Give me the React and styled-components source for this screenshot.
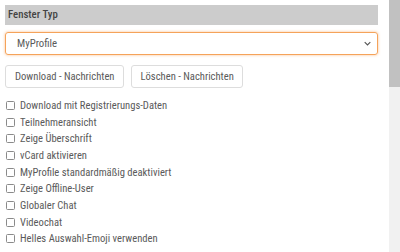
import React from 'react';
import styled, { createGlobalStyle } from 'styled-components';

const GlobalStyle = createGlobalStyle`
  html, body {
    margin: 0;
    padding: 0;
    background: #ffffff;
    font-family: Roboto, "Liberation Sans", sans-serif;
    overflow: hidden;
  }
`;

const options = [
  'Download mit Registrierungs-Daten',
  'Teilnehmeransicht',
  'Zeige Überschrift',
  'vCard aktivieren',
  'MyProfile standardmäßig deaktiviert',
  'Zeige Offline-User',
  'Globaler Chat',
  'Videochat',
  'Helles Auswahl-Emoji verwenden',
];

const App = () => {
  return (
    <>
      <GlobalStyle />
      <Frame>
        <Panel>
          <SectionTitle>Fenster Typ</SectionTitle>
          <Select>
            <span>MyProfile</span>
            <Chevron viewBox="0 0 10 6">
              <path d="M1 1l4 4 4-4" />
            </Chevron>
          </Select>
          <ButtonRow>
            <Button>Download - Nachrichten</Button>
            <Button>Löschen - Nachrichten</Button>
          </ButtonRow>
          <OptionList>
            {options.map((label) => (
              <Option key={label}>
                <Box />
                {label}
              </Option>
            ))}
          </OptionList>
        </Panel>
        <Scrollbar>
          <Thumb />
        </Scrollbar>
      </Frame>
    </>
  );
};

const Frame = styled.div`
  display: flex;
  width: 400px;
  height: 252px;
  overflow: hidden;
`;

const Panel = styled.div`
  flex: 0 0 auto;
  width: 373px;
  padding: 5px 0 0 5px;
  display: flex;
  flex-direction: column;
  font-stretch: 85%;
`;

const SectionTitle = styled.div`
  height: 20px;
  line-height: 20px;
  background: #cccccc;
  padding-left: 3px;
  font-size: 10.8px;
  font-weight: 500;
  color: #444444;
`;

const Select = styled.div`
  margin-top: 7px;
  height: 21px;
  border: 1px solid #f5a35a;
  border-radius: 3px;
  box-shadow: 0 0 3px rgba(245, 150, 70, 0.6);
  display: flex;
  align-items: center;
  justify-content: space-between;
  padding: 0 6px 0 11px;
  font-size: 10.8px;
  color: #5a5a5a;
`;

const Chevron = styled.svg`
  width: 7px;
  height: 5px;
  fill: none;
  stroke: #555555;
  stroke-width: 1.6;
`;

const ButtonRow = styled.div`
  display: flex;
  gap: 7px;
  margin-top: 10px;
`;

const Button = styled.button`
  height: 23px;
  padding: 0 8px 0 9px;
  background: #ffffff;
  border: 1px solid #dddddd;
  border-radius: 3px;
  font-family: inherit;
  font-stretch: inherit;
  font-size: 10.6px;
  color: #5a5a5a;
`;

const OptionList = styled.div`
  display: flex;
  flex-direction: column;
  margin-top: 9px;
`;

const Option = styled.label`
  display: flex;
  align-items: center;
  gap: 5px;
  height: 16.7px;
  font-size: 10.6px;
  color: #5a5a5a;
`;

const Box = styled.span`
  width: 7px;
  height: 7px;
  margin-left: 1px;
  border: 1px solid #8a8a8a;
  border-radius: 1.5px;
  background: #ffffff;
`;

const Scrollbar = styled.div`
  margin-left: auto;
  width: 11px;
  height: 100%;
  background: #f1f1f1;
`;

const Thumb = styled.div`
  height: 87px;
  background: #c1c1c1;
`;

export default App;
